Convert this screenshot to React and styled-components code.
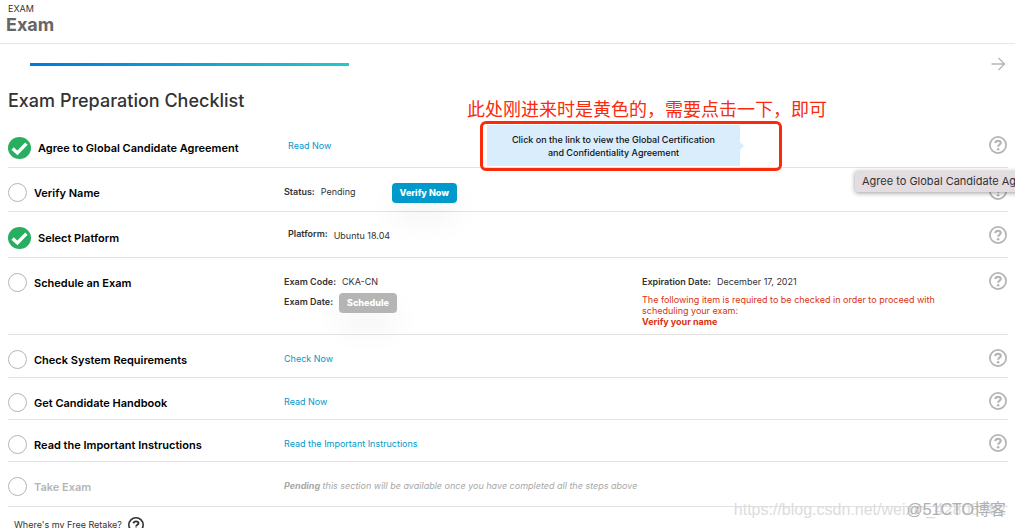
import React from "react";
import styled, { createGlobalStyle, css } from "styled-components";

const GlobalStyle = createGlobalStyle`
  * { box-sizing: border-box; }
  body {
    margin: 0;
    background: #fff;
    color: #333;
    font: 9px/20px Inter, "Noto Sans CJK SC", sans-serif;
  }
`;

const Page = styled.div`
  position: relative;
  min-height: 100vh;
  overflow: hidden;
`;

const Header = styled.header`
  height: 44px;
  padding: 3px 6px 0;
  border-bottom: 1px solid #e6e6e6;
`;

const Eyebrow = styled.div`
  padding-left: 2px;
  line-height: 12px;
`;

const PageName = styled.h1`
  margin: 0;
  color: #666;
  font-size: 18px;
  font-weight: 700;
  line-height: 20px;
`;

const Steps = styled.div`
  display: flex;
  align-items: center;
  justify-content: space-between;
  height: 41px;
  padding: 0 9px 0 30px;
`;

const Progress = styled.div`
  flex: 0 1 319px;
  height: 3px;
  background: linear-gradient(90deg, #0078e0, #27c7c7);
`;

const IconButton = styled.button`
  display: block;
  padding: 0;
  border: 0;
  background: none;
  color: ${(p) => (p.$dark ? "#333" : "#b5b5b5")};
  svg { display: block; }
`;

const Main = styled.main`
  position: relative;
  padding: 0 7px 0 8px;
`;

const Title = styled.h2`
  margin: 0;
  padding: 4px 0 9px;
  font-size: 18px;
  font-weight: 500;
  line-height: 24px;
`;

const Row = styled.section`
  position: relative;
  display: grid;
  grid-template-columns: 276fr 358fr 347fr 19px;
  align-items: start;
  min-height: ${(p) => p.$height}px;
  padding: 14px 0 5px;
  border-bottom: 1px solid #e2e2e2;
`;

const Heading = styled.div`
  display: flex;
  align-items: center;
  gap: 7px;
  padding-top: 1px;
`;

const Name = styled.h3`
  margin: 0;
  color: ${(p) => (p.$muted ? "#b5b5b5" : "#000")};
  font-size: 11px;
  font-weight: 600;
  line-height: 21px;
`;

const Circle = styled.span`
  align-self: flex-start;
  width: 19px;
  height: 19px;
  border: 1px solid #b5b5b5;
  border-radius: 50%;
`;

const Details = styled.div`
  padding-left: ${(p) => (p.$indent ? 4 : 0)}px;
`;

const Field = styled.div`
  display: flex;
  align-items: flex-start;
  gap: 6px;
`;

const Label = styled.span`
  font-weight: 600;
  line-height: ${(p) => (p.$raised ? 16 : 20)}px;
`;

const Link = styled.a`
  color: #0099cc;
  text-decoration: none;
`;

const Button = styled.button`
  height: 20px;
  margin: 1px 0 0 ${(p) => (p.$spaced ? 30 : 0)}px;
  padding: 0 8px;
  border: 0;
  border-radius: 4px;
  background: #0099cc;
  box-shadow: 0 15px 30px rgba(0, 0, 0, 0.06);
  color: #fff;
  font: 800 9px/20px Inter, sans-serif;
  &:disabled { background: #b5b5b5; }
`;

const Warning = styled.p`
  max-width: 300px;
  margin: 2px 0 0;
  color: #d9330f;
  line-height: 11px;
  strong { display: block; }
`;

const Pending = styled.em`
  color: #a8a8a8;
  white-space: nowrap;
`;

const Footer = styled.footer`
  display: flex;
  align-items: center;
  gap: 6px;
  height: 36px;
  padding-left: 6px;
`;

const Hint = styled.div`
  position: absolute;
  top: 3px;
  right: 268px;
  width: 253px;
  padding: 8px 0 7px;
  background: #d9edfd;
  color: #111;
  font-weight: 500;
  line-height: 13px;
  text-align: center;
  &::after {
    content: "";
    position: absolute;
    top: 17px;
    left: 100%;
    border: 4px solid transparent;
    border-left-color: #d9edfd;
    border-right-width: 0;
  }
`;

const Tooltip = styled.div`
  position: absolute;
  z-index: 2;
  top: 49px;
  left: calc(100% - 153px);
  padding: 0 7px;
  border-radius: 2px;
  background: #e3dce1;
  box-shadow: 0 1px 5px rgba(0, 0, 0, 0.4);
  font-size: 11px;
  line-height: 21px;
  white-space: nowrap;
`;

const Frame = styled.div`
  position: absolute;
  top: -1px;
  right: 226px;
  width: 302px;
  height: 50px;
  border: 3px solid #fa2a0c;
  border-radius: 6px;
`;

const Note = styled.div`
  position: absolute;
  right: 181px;
  bottom: calc(100% + 2px);
  color: #fa2a0c;
  font: 18px/24px "Noto Sans CJK SC", sans-serif;
  white-space: nowrap;
`;

const mark = css`
  position: absolute;
  top: 498px;
  line-height: 24px;
  white-space: nowrap;
`;

const SourceMark = styled.div`
  ${mark}
  right: 9px;
  color: #dcdcdc;
  font-family: "Liberation Sans", sans-serif;
  font-size: 16px;
`;

const SiteMark = styled.div`
  ${mark}
  right: 9px;
  color: #b0b0b0;
  font-family: "Liberation Sans", "Noto Sans CJK SC", sans-serif;
  font-size: 16px;
`;

const Check = () => (
  <svg width="23" height="22" viewBox="0 0 23 22" aria-label="Done">
    <ellipse cx="11.5" cy="11" rx="11.5" ry="11" fill="#27ae60" />
    <path d="M4.6 11.4l4.8 4.5 9-9.3" fill="none" stroke="#fff" strokeWidth="3.4" />
  </svg>
);

const Help = ({ dark, size = 18 }) => (
  <IconButton $dark={dark} aria-label="Help">
    <svg width={size} height={size} viewBox="0 0 18 18" fill="none" stroke="currentColor">
      <circle cx="9" cy="9" r="8.1" strokeWidth="1.8" />
      <path d="M6.2 7.1C6.4 5.6 7.5 4.9 9 4.9c1.6 0 2.8.8 2.8 2.1 0 1.6-2.7 1.8-2.7 3.7" strokeWidth="2.1" />
      <circle cx="9.1" cy="13.2" r="1.3" fill="currentColor" stroke="none" />
    </svg>
  </IconButton>
);

const Item = ({ name, height, done, muted, children, extra, overlay }) => (
  <Row $height={height}>
    <Heading>
      {done ? <Check /> : <Circle />}
      <Name $muted={muted}>{name}</Name>
    </Heading>
    <Details $indent={done}>{children}</Details>
    <div>{extra}</div>
    {!muted && <Help />}
    {overlay}
  </Row>
);

export default function App() {
  return (
    <Page>
      <GlobalStyle />
      <Header>
        <Eyebrow>EXAM</Eyebrow>
        <PageName>Exam</PageName>
      </Header>
      <Steps>
        <Progress />
        <IconButton aria-label="Next">
          <svg width="16" height="17" viewBox="0 0 16 17" fill="none" stroke="currentColor" strokeWidth="1.3">
            <path d="M1.5 8h13M8.5 2l6 6-6 6" />
          </svg>
        </IconButton>
      </Steps>
      <Main>
        <Title>Exam Preparation Checklist</Title>
        <Item
          name="Agree to Global Candidate Agreement"
          height={46}
          done
          overlay={
            <>
              <Hint>
                Click on the link to view the Global Certification
                <br />
                and Confidentiality Agreement
              </Hint>
              <Frame />
              <Note>此处刚进来时是黄色的，需要点击一下，即可</Note>
              <Tooltip role="tooltip">Agree to Global Candidate Agreement</Tooltip>
            </>
          }
        >
          <Link href="#agreement">Read Now</Link>
        </Item>
        <Item name="Verify Name" height={44}>
          <Field>
            <Label>Status:</Label>
            <span>Pending</span>
            <Button $spaced>Verify Now</Button>
          </Field>
        </Item>
        <Item name="Select Platform" height={46} done>
          <Field>
            <Label $raised>Platform:</Label>
            <span>Ubuntu 18.04</span>
          </Field>
        </Item>
        <Item
          name="Schedule an Exam"
          height={77}
          extra={
            <>
              <Field>
                <Label>Expiration Date:</Label>
                <span>December 17, 2021</span>
              </Field>
              <Warning>
                The following item is required to be checked in order to proceed with scheduling your exam:
                <strong>Verify your name</strong>
              </Warning>
            </>
          }
        >
          <Field>
            <Label>Exam Code:</Label>
            <span>CKA-CN</span>
          </Field>
          <Field>
            <Label>Exam Date:</Label>
            <Button disabled>Schedule</Button>
          </Field>
        </Item>
        <Item name="Check System Requirements" height={43}>
          <Link href="#system">Check Now</Link>
        </Item>
        <Item name="Get Candidate Handbook" height={42}>
          <Link href="#handbook">Read Now</Link>
        </Item>
        <Item name="Read the Important Instructions" height={42}>
          <Link href="#instructions">Read the Important Instructions</Link>
        </Item>
        <Item name="Take Exam" height={45} muted>
          <Pending>
            <strong>Pending</strong> this section will be available once you have completed all the steps above
          </Pending>
        </Item>
        <Footer>
          <span>Where's my Free Retake?</span>
          <Help dark size={16} />
        </Footer>
      </Main>
      <SourceMark>https://blog.csdn.net/weixin_42808782</SourceMark>
      <SiteMark>@51CTO博客</SiteMark>
    </Page>
  );
}
